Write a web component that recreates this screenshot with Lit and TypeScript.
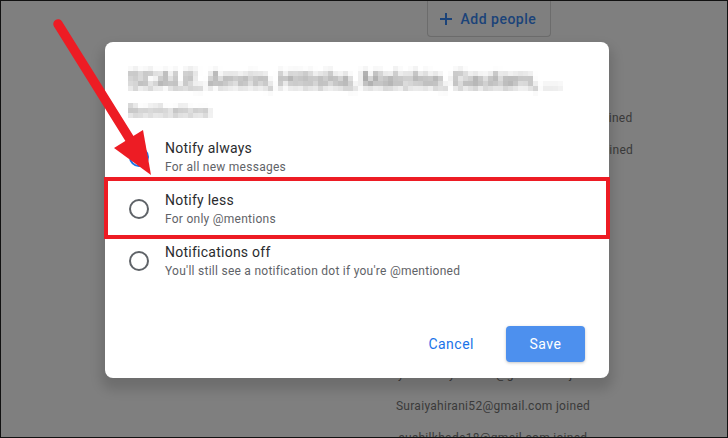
import { LitElement, html, css } from 'lit';
import { customElement } from 'lit/decorators.js';

const BACKGROUND_LINES = [
  'first.member.account.example@gmail.com joined',
  'second.member.account.exam@gmail.com joined',
  '',
  '',
  '',
  '',
  '',
  '',
  'Priyaarunkuyadav82@gmail.com joined',
  'Suraiyahirani52@gmail.com joined',
  'sushilkhade18@gmail.com joined',
];

const OPTIONS = [
  { label: 'Notify always', hint: 'For all new messages', checked: true },
  { label: 'Notify less', hint: 'For only @mentions', checked: false },
  { label: 'Notifications off', hint: "You'll still see a notification dot if you're @mentioned", checked: false },
];

@customElement('app-root')
export class AppRoot extends LitElement {
  static styles = css`
    :host {
      display: block;
      position: relative;
      width: 728px;
      height: 438px;
      box-sizing: border-box;
      overflow: hidden;
      background: #7f7f7f;
      border: 1px solid #111;
      font-family: Roboto, "Liberation Sans", sans-serif;
    }

    .page {
      display: flex;
      flex-direction: column;
      align-items: center;
      padding-left: 258px;
    }

    .add-people {
      display: flex;
      align-items: center;
      gap: 8px;
      box-sizing: border-box;
      width: 124px;
      height: 36px;
      margin-right: 9px;
      padding-left: 11px;
      border: 1px solid #6c6c6c;
      border-top: none;
      border-radius: 0 0 4px 4px;
      color: #1b4379;
      font-size: 14px;
      font-weight: 500;
      letter-spacing: 0.5px;
    }

    .add-people svg {
      flex: none;
    }

    .log {
      display: flex;
      flex-direction: column;
      align-items: center;
      margin-top: 65px;
    }

    .log div {
      height: 32px;
      line-height: 32px;
      white-space: nowrap;
      color: #3a3a3a;
      font-size: 12px;
      letter-spacing: 0.3px;
    }

    .dialog {
      position: absolute;
      left: 104px;
      top: 41px;
      display: flex;
      flex-direction: column;
      box-sizing: border-box;
      width: 504px;
      height: 336px;
      padding: 24px 24px 16px 24px;
      background: #fff;
      border-radius: 8px;
      box-shadow: 0 8px 12px 4px rgba(0, 0, 0, 0.14);
    }

    .title {
      margin-left: -1px;
      color: #666;
      font-size: 23px;
      line-height: 30px;
      white-space: nowrap;
      filter: url(#pixelate);
    }

    .subtitle {
      margin-top: 7px;
      margin-left: -1px;
      color: #888;
      font-size: 14.5px;
      line-height: 18px;
      filter: url(#pixelate-small);
    }

    .options {
      margin-top: 10px;
    }

    .option {
      display: flex;
      align-items: center;
      gap: 16px;
      height: 52px;
    }

    .radio {
      flex: none;
      box-sizing: border-box;
      width: 20px;
      height: 20px;
      border: 2px solid #5f6368;
      border-radius: 50%;
    }

    .radio.checked {
      border-color: #1a73e8;
      background: radial-gradient(circle, #1a73e8 5px, #fff 5.5px);
    }

    .label {
      color: #2a2b2e;
      font-size: 14px;
      line-height: 20px;
      letter-spacing: 0.25px;
    }

    .hint {
      color: #5f6368;
      font-size: 12px;
      line-height: 18px;
      letter-spacing: 0.26px;
    }

    .actions {
      display: flex;
      justify-content: flex-end;
      align-items: center;
      gap: 32px;
      margin-top: auto;
    }

    .cancel {
      color: #1a73e8;
      font-size: 14px;
      letter-spacing: 0.5px;
    }

    .save {
      display: flex;
      align-items: center;
      justify-content: center;
      width: 79px;
      height: 36px;
      border-radius: 4px;
      background: #4d90ee;
      color: #fff;
      font-size: 14px;
      letter-spacing: 0.5px;
      box-shadow: 0 1px 3px rgba(60, 64, 67, 0.3);
    }

    .highlight {
      position: absolute;
      left: 103px;
      top: 176px;
      box-sizing: border-box;
      width: 506px;
      height: 62px;
      border: 4px solid #ed1c24;
    }

    .arrow {
      position: absolute;
      left: -1px;
      top: -1px;
    }

    .filters {
      position: absolute;
      width: 0;
      height: 0;
    }
  `;

  render() {
    return html`
      <svg class="filters" aria-hidden="true">
        <filter id="pixelate" x="0" y="0" width="100%" height="100%" color-interpolation-filters="sRGB">
          <feGaussianBlur in="SourceGraphic" stdDeviation="2" result="soft" />
          <feFlood x="2" y="2" width="1" height="1" />
          <feComposite width="5" height="5" />
          <feTile result="grid" />
          <feComposite in="soft" in2="grid" operator="in" />
          <feMorphology operator="dilate" radius="2" />
        </filter>
        <filter id="pixelate-small" x="0" y="0" width="100%" height="100%" color-interpolation-filters="sRGB">
          <feGaussianBlur in="SourceGraphic" stdDeviation="1.6" result="soft" />
          <feFlood x="2" y="2" width="1" height="1" />
          <feComposite width="5" height="5" />
          <feTile result="grid" />
          <feComposite in="soft" in2="grid" operator="in" />
          <feMorphology operator="dilate" radius="2" />
        </filter>
      </svg>

      <div class="page">
        <div class="add-people">
          <svg width="14" height="14" viewBox="0 0 14 14">
            <path d="M7 1v12M1 7h12" stroke="#1b4379" stroke-width="2" fill="none" />
          </svg>
          Add people
        </div>
        <div class="log">
          ${BACKGROUND_LINES.map((line) => html`<div>${line}</div>`)}
        </div>
      </div>

      <div class="dialog">
        <div class="title">SCALE, Amrin, Hitisha, Malchie, Gautam, ...</div>
        <div class="subtitle">Notifications</div>
        <div class="options">
          ${OPTIONS.map(
            (option) => html`
              <div class="option">
                <div class="radio ${option.checked ? 'checked' : ''}"></div>
                <div>
                  <div class="label">${option.label}</div>
                  <div class="hint">${option.hint}</div>
                </div>
              </div>
            `
          )}
        </div>
        <div class="actions">
          <div class="cancel">Cancel</div>
          <div class="save">Save</div>
        </div>
      </div>

      <div class="highlight"></div>
      <svg class="arrow" width="728" height="438" viewBox="0 0 728 438">
        <path d="M58 24L131 141" stroke="#ed1c24" stroke-width="9.5" stroke-linecap="round" fill="none" />
        <path d="M143 130L114 148L151 175Z" fill="#ed1c24" />
      </svg>
    `;
  }
}
